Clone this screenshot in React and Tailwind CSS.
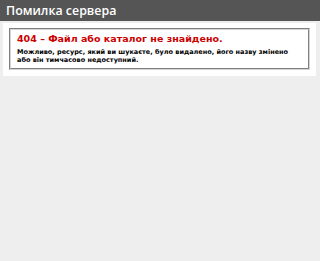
import React from 'react';

export default function App() {
  return (
    <div className="min-h-screen bg-[#eeeeee] font-['DejaVu_Sans',Verdana,sans-serif]">
      {/* Header */}
      <div className="bg-[#555555] text-white h-[21px] px-[6px] text-[12.4px] leading-[21px] font-semibold font-['Open_Sans',sans-serif]">
        Помилка сервера
      </div>

      {/* Content container */}
      <div className="ml-[3px] mt-[2px] w-[313px] bg-white px-[6px] pt-[5px] pb-[6px]">
        <div className="border-2 [border-style:groove] border-[#d4d4d4] px-[6px] pt-[2px] pb-[4px]">
          <h2 className="text-[9.5px] leading-[13px] font-bold text-[#cc0000]">
            404 – Файл або каталог не знайдено.
          </h2>
          <h3 className="mt-[3px] text-[6.5px] leading-[8px] font-bold text-black">
            Можливо, ресурс, який ви шукаєте, було видалено, його назву змінено
            <br />
            або він тимчасово недоступний.
          </h3>
        </div>
      </div>
    </div>
  );
}
